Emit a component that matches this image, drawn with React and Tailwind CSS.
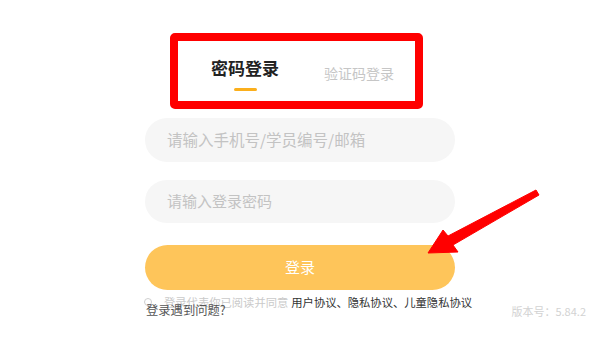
import React from "react";

export default function App() {
  return (
    <div className="relative w-[600px] h-[337px] overflow-hidden bg-white font-['Noto_Sans_CJK_SC',sans-serif]">
      {/* Login form */}
      <div className="flex flex-col pt-[57px]">
        <div className="w-[310px] mx-auto flex flex-col">
          {/* Tabs */}
          <div className="flex pl-[66px]">
            <div className="flex flex-col items-center">
              <span className="text-[17px] leading-[22px] font-bold text-[#222222]">密码登录</span>
              <span className="mt-[9px] w-[23px] h-[3px] rounded-full bg-[#fbaf1c]"></span>
            </div>
            <span className="ml-[45px] mt-[6px] text-[14px] leading-[20px] text-[#c6c6c6]">验证码登录</span>
          </div>

          {/* Inputs */}
          <div className="mt-[27px] h-[44px] rounded-full bg-[#f6f6f6] pl-[22px] flex items-center text-[15.5px] text-[#c3c3c3]">
            请输入手机号/学员编号/邮箱
          </div>
          <div className="mt-[18px] h-[43px] rounded-full bg-[#f6f6f6] pl-[22px] flex items-center text-[15px] text-[#c3c3c3]">
            请输入登录密码
          </div>

          {/* Submit */}
          <button className="mt-[22px] h-[45px] rounded-full bg-[#fec55a] text-white text-[15px] flex items-center justify-center">
            登录
          </button>

          {/* Agreement */}
          <div className="mt-[5px] flex items-center h-[14px] text-[11.3px] leading-[14px] whitespace-nowrap">
            <span className="shrink-0 w-[8px] h-[8px] rounded-full border border-[#cfcfcf] ml-[-1px]"></span>
            <span className="ml-[12px] text-[#cacaca]">登录代表你已阅读并同意</span>
            <span className="ml-[3px] text-[#333333]">用户协议、隐私协议、儿童隐私协议</span>
          </div>
        </div>

        {/* Bottom row */}
        <div className="-mt-[7px] flex items-end justify-between pl-[146px] pr-[14px]">
          <span className="text-[12.3px] leading-[16px] text-[#555555]">登录遇到问题?</span>
          <span className="text-[11px] leading-[14px] text-[#d2d2d2]">版本号：5.84.2</span>
        </div>
      </div>

      {/* Annotation overlays */}
      <div className="absolute left-[170px] top-[33px] w-[253px] h-[76px] border-[8px] border-[#ff0000] rounded-[5px] pointer-events-none"></div>
      <svg className="absolute inset-0 pointer-events-none" width="600" height="337" viewBox="0 0 600 337">
        <polygon
          points="428,253 443,230 448,236 536,190 539,195 453,245 458,252"
          fill="#ff0000"
          stroke="#ff0000"
          strokeWidth="1"
          strokeLinejoin="round"
        />
      </svg>
    </div>
  );
}
